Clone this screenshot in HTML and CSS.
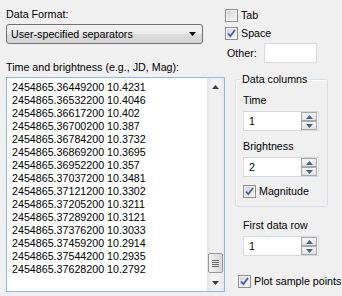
FILE: index.html
```html
<!DOCTYPE html>
<html>
<head>
    <meta charset="utf-8">
    <link rel="stylesheet" href="styles.css">
</head>
<body>
    <div class="dialog">
        <!-- left side: format + data -->
        <div class="left">
            <div class="label">Data Format:</div>
            <div class="combo">
                <span>User-specified separators</span>
                <svg width="7" height="4" viewBox="0 0 7 4"><path d="M0 0H7L3.5 4Z" fill="#000"/></svg>
            </div>
            <div class="label label-data">Time and brightness (e.g., JD, Mag):</div>
            <div class="textbox">
                <div class="lines">2454865.36449200 10.4231
2454865.36532200 10.4046
2454865.36617200 10.402
2454865.36700200 10.387
2454865.36784200 10.3732
2454865.36869200 10.3695
2454865.36952200 10.357
2454865.37037200 10.3481
2454865.37121200 10.3302
2454865.37205200 10.3211
2454865.37289200 10.3121
2454865.37376200 10.3033
2454865.37459200 10.2914
2454865.37544200 10.2935
2454865.37628200 10.2792</div>
                <div class="vscroll">
                    <div class="sb-btn"><svg width="7" height="4" viewBox="0 0 7 4"><path d="M3.5 0L7 4H0Z" fill="#3c3c3c"/></svg></div>
                    <div class="sb-track">
                        <div class="sb-thumb">
                            <svg width="7" height="7" viewBox="0 0 7 7"><path d="M0 .5H7M0 2.5H7M0 4.5H7M0 6.5H7" stroke="#6b6b6b"/></svg>
                        </div>
                    </div>
                    <div class="sb-btn"><svg width="7" height="4" viewBox="0 0 7 4"><path d="M0 0H7L3.5 4Z" fill="#3c3c3c"/></svg></div>
                </div>
            </div>
        </div>

        <!-- right side: separators + columns -->
        <div class="right">
            <div class="check">
                <span class="box"></span>Tab
            </div>
            <div class="check check-space">
                <span class="box"><svg width="11" height="11" viewBox="0 0 11 11"><path d="M2 5.5L4.3 8L9 2" fill="none" stroke="#4a5f97" stroke-width="1.8"/></svg></span>Space
            </div>
            <div class="other">
                <span class="other-label">Other:</span>
                <span class="field"></span>
            </div>

            <fieldset class="group">
                <legend>Data columns</legend>
                <div class="label">Time</div>
                <div class="spin">
                    <span class="spin-value">1</span>
                    <span class="spin-btns">
                        <span class="spin-btn"><svg width="7" height="4" viewBox="0 0 7 4"><path d="M3.5 0L7 4H0Z" fill="#4d6185"/></svg></span>
                        <span class="spin-btn"><svg width="7" height="4" viewBox="0 0 7 4"><path d="M0 0H7L3.5 4Z" fill="#4d6185"/></svg></span>
                    </span>
                </div>
                <div class="label label-gap">Brightness</div>
                <div class="spin">
                    <span class="spin-value">2</span>
                    <span class="spin-btns">
                        <span class="spin-btn"><svg width="7" height="4" viewBox="0 0 7 4"><path d="M3.5 0L7 4H0Z" fill="#4d6185"/></svg></span>
                        <span class="spin-btn"><svg width="7" height="4" viewBox="0 0 7 4"><path d="M0 0H7L3.5 4Z" fill="#4d6185"/></svg></span>
                    </span>
                </div>
                <div class="check check-mag">
                    <span class="box"><svg width="11" height="11" viewBox="0 0 11 11"><path d="M2 5.5L4.3 8L9 2" fill="none" stroke="#4a5f97" stroke-width="1.8"/></svg></span>Magnitude
                </div>
            </fieldset>

            <div class="label label-row">First data row</div>
            <div class="spin spin-row">
                <span class="spin-value">1</span>
                <span class="spin-btns">
                    <span class="spin-btn"><svg width="7" height="4" viewBox="0 0 7 4"><path d="M3.5 0L7 4H0Z" fill="#4d6185"/></svg></span>
                    <span class="spin-btn"><svg width="7" height="4" viewBox="0 0 7 4"><path d="M0 0H7L3.5 4Z" fill="#4d6185"/></svg></span>
                </span>
            </div>
            <div class="check check-plot">
                <span class="box"><svg width="11" height="11" viewBox="0 0 11 11"><path d="M2 5.5L4.3 8L9 2" fill="none" stroke="#4a5f97" stroke-width="1.8"/></svg></span>Plot sample points
            </div>
        </div>
    </div>
</body>
</html>
```

FILE: styles.css
```css
/* window */
body {
    margin: 0;
    background-color: #f0f0f0;
    font-family: "Liberation Sans", Arial, sans-serif;
    font-size: 10.7px;
    line-height: 13px;
    color: #000;
}

.dialog {
    display: flex;
    width: 342px;
    height: 296px;
}

.label {
    height: 13px;
    white-space: nowrap;
}

/* left column */
.left {
    width: 219px;
    padding: 8px 0 0 6px;
}

.combo {
    margin-top: 3px;
    width: 197px;
    height: 20px;
    box-sizing: border-box;
    border: 1px solid #707070;
    border-radius: 3px;
    background: linear-gradient(#f2f2f2, #ebebeb 50%, #dddddd 50%, #d3d3d3);
    display: flex;
    align-items: center;
    justify-content: space-between;
    padding: 0 6px 0 4px;
}

.label-data {
    margin-top: 17px;
}

.textbox {
    margin-top: 3px;
    height: 215px;
    box-sizing: border-box;
    border: 1px solid #8db9e2;
    background-color: #fff;
    display: flex;
}

.lines {
    flex: 1;
    padding: 3px 0 0 5px;
    white-space: pre;
    overflow: hidden;
}

/* scrollbar */
.vscroll {
    width: 17px;
    display: flex;
    flex-direction: column;
    background: linear-gradient(90deg, #e3e3e3, #f1f1f1 25%, #f1f1f1 75%, #e8e8e8);
}

.sb-btn {
    height: 17px;
    display: flex;
    align-items: center;
    justify-content: center;
}

.sb-track {
    flex: 1;
    display: flex;
    flex-direction: column;
    justify-content: flex-end;
}

.sb-thumb {
    height: 20px;
    margin: 0 1px 1px;
    box-sizing: border-box;
    border: 1px solid #979797;
    border-radius: 2px;
    background: linear-gradient(90deg, #f4f4f4, #e4e4e4 50%, #d9d9d9);
    display: flex;
    align-items: center;
    justify-content: center;
}

/* right column */
.right {
    width: 117px;
    padding-top: 9px;
}

.check {
    display: flex;
    align-items: center;
    gap: 3px;
    height: 13px;
    white-space: nowrap;
}

.box {
    width: 13px;
    height: 13px;
    box-sizing: border-box;
    border: 1px solid #8e8f8f;
    background: linear-gradient(135deg, #cfd3d8, #f7f7f7);
    box-shadow: inset 0 0 0 1px #f4f4f4;
    display: flex;
    align-items: center;
    justify-content: center;
}

.check-space {
    margin-top: 5px;
}

.other {
    margin-top: 3px;
    display: flex;
    align-items: center;
    height: 20px;
    padding-left: 2px;
}

.other-label {
    width: 37px;
}

.field {
    width: 53px;
    height: 20px;
    box-sizing: border-box;
    border: 1px solid #d6d9de;
    background-color: #fff;
}

/* group box */
.group {
    margin: 10px 0 0 10px;
    width: 93px;
    box-sizing: border-box;
    padding: 8px 0 8px 7px;
    border: 1px solid #d5dfe5;
    border-radius: 3px;
    box-shadow: inset 1px 1px 0 #fff;
    min-inline-size: 0;
}

.group legend {
    margin-left: -3px;
    padding: 0 2px;
    line-height: 13px;
}

.label-gap {
    margin-top: 9px;
}

.spin {
    margin-top: 4px;
    width: 76px;
    height: 20px;
    box-sizing: border-box;
    border: 1px solid #d6d9de;
    background-color: #fff;
    display: flex;
    justify-content: space-between;
}

.spin-value {
    padding: 3px 0 0 5px;
}

.spin-btns {
    display: flex;
    flex-direction: column;
    width: 16px;
    padding: 0 1px 0 0;
}

.spin-btn {
    height: 9px;
    box-sizing: border-box;
    border: 1px solid #a7a7a7;
    background: linear-gradient(#f6f6f6, #e2e2e2);
    display: flex;
    align-items: center;
    justify-content: center;
}

.check-mag {
    margin-top: 8px;
}

.label-row {
    margin: 12px 0 0 18px;
}

.spin-row {
    margin-left: 18px;
}

.check-plot {
    margin: 19px 0 0 13px;
}
```
